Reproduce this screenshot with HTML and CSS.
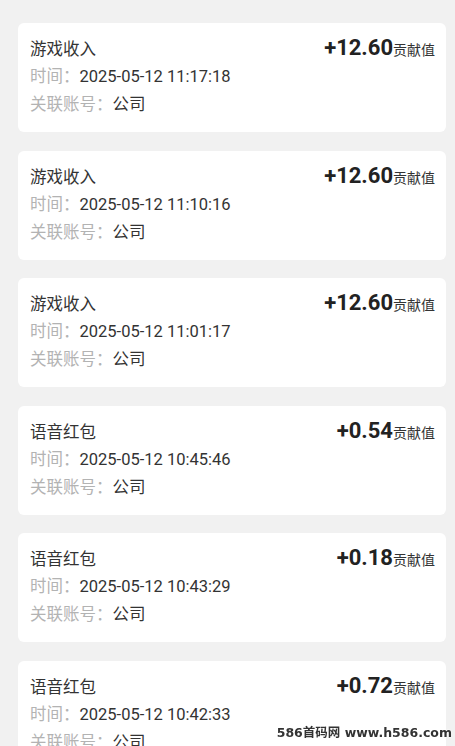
FILE: index.html
```html
<!DOCTYPE html>
<html lang="zh-CN">
<head>
    <meta charset="UTF-8">
    <meta name="viewport" content="width=device-width, initial-scale=1.0">
    <title>贡献值明细</title>
    <link rel="stylesheet" href="styles.css">
</head>
<body>
    <!-- Record list -->
    <div class="record-list">
        <div class="record-card">
            <div class="record-head">
                <span class="record-title">游戏收入</span>
                <span class="record-amount">+12.60<small>贡献值</small></span>
            </div>
            <div class="record-row"><span class="label">时间：</span><span class="value">2025-05-12 11:17:18</span></div>
            <div class="record-row"><span class="label">关联账号：</span><span class="value">公司</span></div>
        </div>

        <div class="record-card">
            <div class="record-head">
                <span class="record-title">游戏收入</span>
                <span class="record-amount">+12.60<small>贡献值</small></span>
            </div>
            <div class="record-row"><span class="label">时间：</span><span class="value">2025-05-12 11:10:16</span></div>
            <div class="record-row"><span class="label">关联账号：</span><span class="value">公司</span></div>
        </div>

        <div class="record-card">
            <div class="record-head">
                <span class="record-title">游戏收入</span>
                <span class="record-amount">+12.60<small>贡献值</small></span>
            </div>
            <div class="record-row"><span class="label">时间：</span><span class="value">2025-05-12 11:01:17</span></div>
            <div class="record-row"><span class="label">关联账号：</span><span class="value">公司</span></div>
        </div>

        <div class="record-card">
            <div class="record-head">
                <span class="record-title">语音红包</span>
                <span class="record-amount">+0.54<small>贡献值</small></span>
            </div>
            <div class="record-row"><span class="label">时间：</span><span class="value">2025-05-12 10:45:46</span></div>
            <div class="record-row"><span class="label">关联账号：</span><span class="value">公司</span></div>
        </div>

        <div class="record-card">
            <div class="record-head">
                <span class="record-title">语音红包</span>
                <span class="record-amount">+0.18<small>贡献值</small></span>
            </div>
            <div class="record-row"><span class="label">时间：</span><span class="value">2025-05-12 10:43:29</span></div>
            <div class="record-row"><span class="label">关联账号：</span><span class="value">公司</span></div>
        </div>

        <div class="record-card">
            <div class="record-head">
                <span class="record-title">语音红包</span>
                <span class="record-amount">+0.72<small>贡献值</small></span>
            </div>
            <div class="record-row"><span class="label">时间：</span><span class="value">2025-05-12 10:42:33</span></div>
            <div class="record-row"><span class="label">关联账号：</span><span class="value">公司</span></div>
        </div>
    </div>

    <!-- Watermark -->
    <div class="watermark">586首码网 www.h586.com</div>
</body>
</html>
```

FILE: styles.css
```css
/* Basic reset */
* {
    margin: 0;
    padding: 0;
    box-sizing: border-box;
}
body {
    background-color: #f1f1f1;
    font-family: Roboto, "Noto Sans CJK SC", sans-serif;
    color: #333;
    overflow: hidden;
    height: 100vh;
}
/* List of records */
.record-list {
    display: flex;
    flex-direction: column;
    gap: 18.6px;
    padding: 23px 9px 0 18px;
}
.record-card {
    background-color: #fff;
    border-radius: 6px;
    padding: 12px 11px 13px 12px;
    height: 109px;
    flex-shrink: 0;
}
.record-head {
    display: flex;
    justify-content: space-between;
    align-items: baseline;
    height: 26px;
    line-height: 26px;
    margin-bottom: 2px;
}
.record-title {
    font-size: 16.5px;
    color: #333;
}
.record-amount {
    font-size: 22px;
    font-weight: bold;
    color: #222;
}
.record-amount small {
    font-size: 14px;
    font-weight: normal;
    color: #333;
}
.record-row {
    height: 28px;
    line-height: 28px;
    font-size: 16.5px;
}
.record-row .label {
    color: #b3b3b3;
}
.record-row .value {
    color: #333;
}
/* Watermark overlay */
.watermark {
    position: fixed;
    right: 3px;
    bottom: 5px;
    font-family: "DejaVu Sans", "Noto Sans CJK SC", sans-serif;
    font-weight: bold;
    font-size: 12.5px;
    color: #333;
    text-shadow: 0 0 2px #fff, 0 0 2px #fff;
}
```
